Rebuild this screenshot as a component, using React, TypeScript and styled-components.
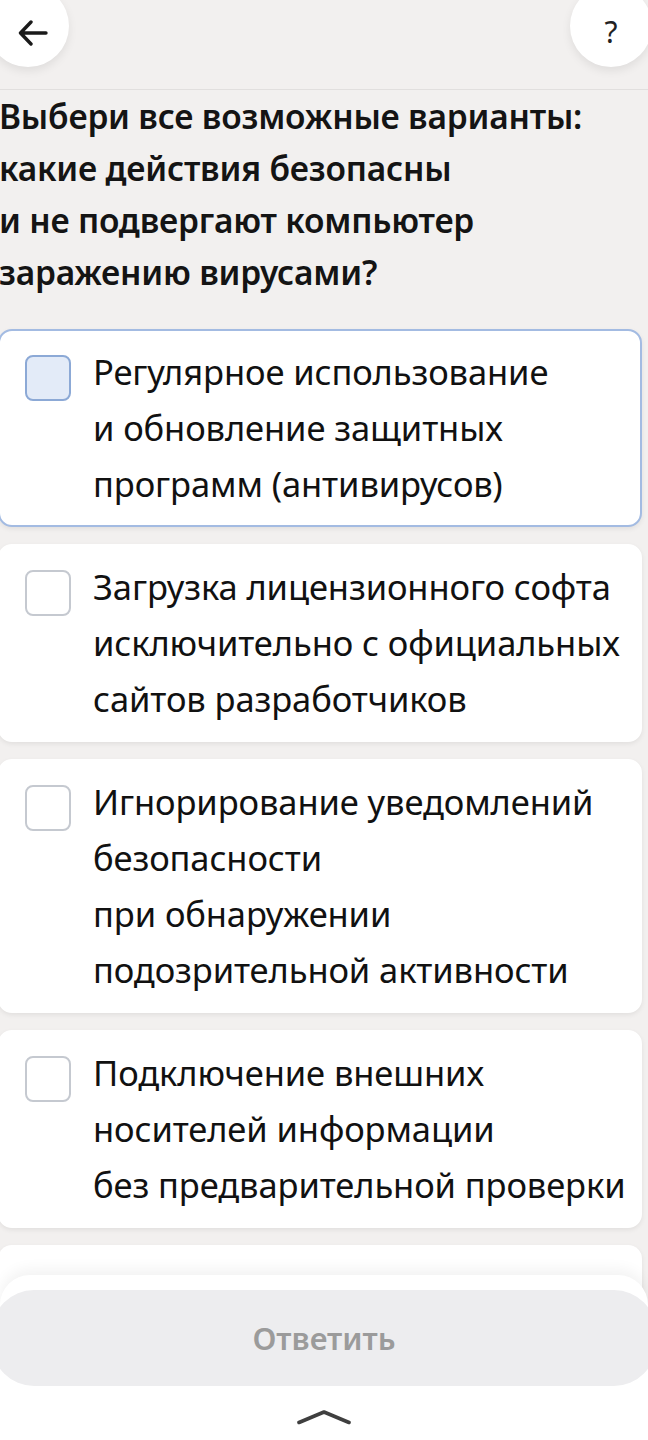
import React, { useState } from "react";
import styled, { createGlobalStyle } from "styled-components";

const GlobalStyle = createGlobalStyle`
  html, body {
    margin: 0;
    padding: 0;
    background: #f2f0ef;
    overflow-x: hidden;
  }
  * {
    box-sizing: border-box;
  }
`;

const options = [
  ["Регулярное использование", "и обновление защитных", "программ (антивирусов)"],
  ["Загрузка лицензионного софта", "исключительно с официальных", "сайтов разработчиков"],
  ["Игнорирование уведомлений", "безопасности", "при обнаружении", "подозрительной активности"],
  ["Подключение внешних", "носителей информации", "без предварительной проверки"],
];

const App = () => {
  const [checked, setChecked] = useState<number[]>([]);
  const focused = 0;

  const toggle = (i: number) => {
    setChecked((prev) =>
      prev.includes(i) ? prev.filter((x) => x !== i) : [...prev, i]
    );
  };

  return (
    <Page>
      <GlobalStyle />
      <Header>
        <RoundButton side="left" aria-label="Назад">
          <svg width="30" height="26" viewBox="0 0 30 26" fill="none">
            <path
              d="M28 13H3M13 2L2.5 13L13 24"
              stroke="#1a1a1a"
              strokeWidth="3.4"
              strokeLinecap="round"
              strokeLinejoin="round"
            />
          </svg>
        </RoundButton>
        <RoundButton side="right" aria-label="Помощь">
          <HelpMark>?</HelpMark>
        </RoundButton>
      </Header>

      <Content>
        <Question>
          Выбери все возможные варианты:
          <br />
          какие действия безопасны
          <br />
          и не подвергают компьютер
          <br />
          заражению вирусами?
        </Question>

        <List>
          {options.map((lines, i) => (
            <Card key={i} active={i === focused} onClick={() => toggle(i)}>
              <Box active={i === focused} checked={checked.includes(i)} />
              <CardText>
                {lines.map((l, j) => (
                  <div key={j}>{l}</div>
                ))}
              </CardText>
            </Card>
          ))}
          {/* next option, hidden under the bottom panel */}
          <PeekCard />
        </List>
      </Content>

      <BottomPanel>
        <AnswerButton disabled={checked.length === 0}>Ответить</AnswerButton>
        <Chevron>
          <svg width="54" height="16" viewBox="0 0 54 16" fill="none">
            <path
              d="M2 13.5L27 3L52 13.5"
              stroke="#3f3f3f"
              strokeWidth="3.6"
              strokeLinecap="round"
              strokeLinejoin="round"
            />
          </svg>
        </Chevron>
      </BottomPanel>
    </Page>
  );
};

const Page = styled.div`
  width: 648px;
  height: 1440px;
  background: #f2f0ef;
  font-family: "Noto Sans", "Open Sans", Arial, sans-serif;
  color: #111;
  position: relative;
  overflow: hidden;
`;

const Header = styled.div`
  height: 90px;
  display: flex;
  justify-content: space-between;
  align-items: flex-start;
  border-bottom: 1px solid #e1dfde;
`;

const RoundButton = styled.button<{ side: "left" | "right" }>`
  width: 82px;
  height: 82px;
  border-radius: 50%;
  border: none;
  background: #fff;
  box-shadow: 0 4px 10px rgba(0, 0, 0, 0.08);
  display: flex;
  align-items: center;
  justify-content: center;
  margin-top: -15px;
  margin-left: ${({ side }) => (side === "left" ? "-13px" : "0")};
  margin-right: ${({ side }) => (side === "right" ? "-4px" : "0")};
  padding: ${({ side }) => (side === "left" ? "13px 4px 0 14px" : "12px 0 0 0")};
  cursor: pointer;
`;

const HelpMark = styled.span`
  font-family: "Noto Sans", sans-serif;
  font-size: 30px;
  color: #222;
  line-height: 1;
`;

const Content = styled.div`
  margin-left: -2px;
  width: 644px;
`;

const Question = styled.h1`
  margin: 0;
  padding-left: 1px;
  font-size: 33.5px;
  font-weight: 600;
  line-height: 52px;
  letter-spacing: -0.2px;
  color: #141414;
`;

const List = styled.div`
  margin-top: 31px;
  display: flex;
  flex-direction: column;
  gap: 17px;
`;

const Card = styled.div<{ active: boolean }>`
  display: flex;
  align-items: flex-start;
  gap: 22px;
  padding: 13px 8px 13px 25px;
  background: #fff;
  border-radius: 14px;
  border: 2px solid ${({ active }) => (active ? "#a3bbe2" : "#fff")};
  box-shadow: 0 2px 5px rgba(0, 0, 0, 0.07);
  cursor: pointer;
`;

const PeekCard = styled.div`
  height: 120px;
  background: #fff;
  border-radius: 14px;
  box-shadow: 0 2px 5px rgba(0, 0, 0, 0.07);
`;

const Box = styled.div<{ active: boolean; checked: boolean }>`
  flex: none;
  width: 46px;
  height: 46px;
  margin-top: 11px;
  border-radius: 8px;
  border: 2px solid ${({ active }) => (active ? "#8ca9d6" : "#c5c9d0")};
  background: ${({ active, checked }) =>
    checked ? "#5b8fe0" : active ? "#e3ebf8" : "#fff"};
`;

const CardText = styled.div`
  font-size: 34.5px;
  line-height: 56px;
  color: #111;
  letter-spacing: -0.1px;
  white-space: nowrap;
`;

const BottomPanel = styled.div`
  position: absolute;
  left: 0;
  right: 0;
  top: 1275px;
  height: 165px;
  background: #fff;
  border-radius: 30px 30px 0 0;
  box-shadow: 0 -6px 14px rgba(0, 0, 0, 0.05);
  display: flex;
  flex-direction: column;
  align-items: center;
  padding-top: 15px;
`;

const AnswerButton = styled.button`
  width: 664px;
  margin: 0 -8px;
  height: 96px;
  border: none;
  border-radius: 42px;
  background: #ededef;
  color: #9b9b9b;
  font-family: "Noto Sans", "Open Sans", sans-serif;
  font-size: 31px;
  font-weight: 600;
`;

const Chevron = styled.div`
  margin-top: 23px;
  display: flex;
  justify-content: center;
`;

export default App;
